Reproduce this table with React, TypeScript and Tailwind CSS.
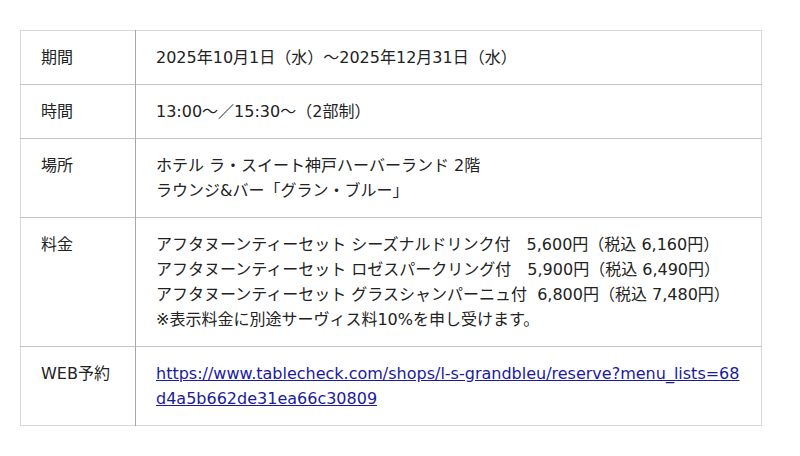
const rows: { label: string; lines: React.ReactNode[] }[] = [
  { label: '期間', lines: ['2025年10月1日（水）〜2025年12月31日（水）'] },
  { label: '時間', lines: ['13:00〜／15:30〜（2部制）'] },
  { label: '場所', lines: ['ホテル ラ・スイート神戸ハーバーランド 2階', 'ラウンジ&バー「グラン・ブルー」'] },
  {
    label: '料金',
    lines: [
      'アフタヌーンティーセット シーズナルドリンク付\u30005,600円（税込 6,160円）',
      'アフタヌーンティーセット ロゼスパークリング付\u30005,900円（税込 6,490円）',
      'アフタヌーンティーセット グラスシャンパーニュ付  6,800円（税込 7,480円）',
      '※表示料金に別途サーヴィス料10%を申し受けます。',
    ],
  },
];

export default function App() {
  return (
    <div
      className="w-[800px] h-[456px] bg-white px-5 pt-[30px] text-[#222] text-[16px] leading-[25px]"
      style={{ fontFamily: '"DejaVu Sans", "Noto Sans CJK JP", sans-serif' }}
    >
      <table className="w-[742px] border-collapse border border-[#d8d8d8]">
        <tbody>
          {rows.map((r) => (
            <tr key={r.label} className="border-b border-[#c4c4c4] align-top">
              <td className="w-[115px] border-r border-[#a8a8a8] pl-5 py-[14px]">{r.label}</td>
              <td className="pl-5 pr-3 py-[14px]">
                {r.lines.map((l, i) => (
                  <div key={i} className="whitespace-pre">{l}</div>
                ))}
              </td>
            </tr>
          ))}
          <tr className="align-top">
            <td className="w-[115px] border-r border-[#a8a8a8] pl-5 py-[14px]">WEB予約</td>
            <td className="pl-5 pr-3 py-[14px]">
              <a href="#" className="text-[#1a1aa0] underline break-all">
                https://www.tablecheck.com/shops/l-s-grandbleu/reserve?menu_lists=68d4a5b662de31ea66c30809
              </a>
            </td>
          </tr>
        </tbody>
      </table>
    </div>
  );
}
